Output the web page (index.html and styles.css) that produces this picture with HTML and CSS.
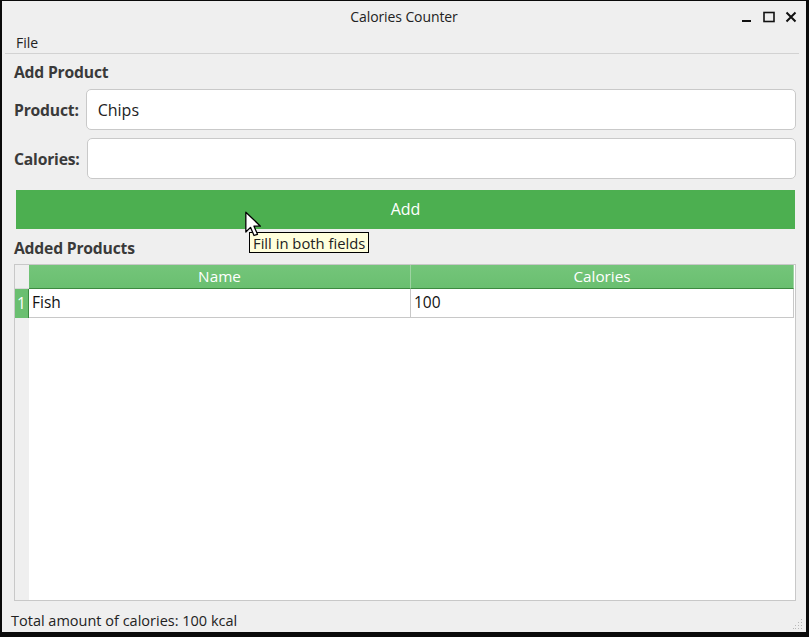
FILE: index.html
```html
<!DOCTYPE html>
<html>
<head>
<meta charset="utf-8">
<link rel="stylesheet" href="styles.css">
</head>
<body>
<div class="window">
  <div class="titlebar">
    <span class="title">Calories Counter</span>
    <div class="controls">
      <svg class="ctl" width="14" height="14" viewBox="0 0 14 14"><rect x="2" y="10" width="9" height="2" fill="#111"/></svg>
      <svg class="ctl" width="14" height="14" viewBox="0 0 14 14"><rect x="2" y="2.5" width="10" height="9" fill="none" stroke="#111" stroke-width="1.6"/></svg>
      <svg class="ctl" width="14" height="14" viewBox="0 0 14 14"><path d="M2.5 2.5 L11.5 11.5 M11.5 2.5 L2.5 11.5" stroke="#111" stroke-width="2"/></svg>
    </div>
  </div>
  <div class="menubar"><span class="menu-item">File</span></div>
  <div class="content">
    <div class="heading">Add Product</div>
    <div class="field-row">
      <label class="label">Product:</label>
      <div class="input">Chips</div>
    </div>
    <div class="field-row row2">
      <label class="label">Calories:</label>
      <div class="input"></div>
    </div>
    <div class="add-btn">Add</div>
    <div class="heading heading2">Added Products</div>
    <div class="table">
      <div class="thead">
        <div class="corner"></div>
        <div class="th name-col">Name</div>
        <div class="th cal-col">Calories</div>
      </div>
      <div class="trow">
        <div class="rowhead">1</div>
        <div class="td name-col">Fish</div>
        <div class="td cal-col">100</div>
      </div>
      <div class="tbody-rest">
        <div class="rowhead-empty"></div>
        <div class="empty"></div>
      </div>
    </div>
  </div>
  <div class="statusbar">
    <span class="status-text">Total amount of calories: 100 kcal</span>
    <svg class="grip" width="10" height="10" viewBox="0 0 10 10">
      <g fill="#b8b8b8">
        <rect x="8" y="0" width="1" height="1"/>
        <rect x="5" y="3" width="1" height="1"/><rect x="8" y="3" width="1" height="1"/>
        <rect x="2" y="6" width="1" height="1"/><rect x="5" y="6" width="1" height="1"/><rect x="8" y="6" width="1" height="1"/>
        <rect x="0" y="9" width="1" height="1"/><rect x="2" y="9" width="1" height="1"/><rect x="5" y="9" width="1" height="1"/><rect x="8" y="9" width="1" height="1"/>
      </g>
    </svg>
  </div>
  <div class="tooltip">Fill in both fields</div>
  <svg class="cursor" width="20" height="28" viewBox="0 0 16 24">
    <path d="M1 1 L1 18 L5 14 L8 21 L11 20 L8 13 L13.5 13 Z" fill="#fff" stroke="#000" stroke-width="1.1" stroke-linejoin="round"/>
  </svg>
</div>
</body>
</html>
```
FILE: styles.css
```css
html, body {
  margin: 0;
  padding: 0;
  background: #0a0a0a;
}
body {
  width: 809px;
  height: 637px;
  padding: 1px 0 0 2px;
  box-sizing: border-box;
  font-family: "Open Sans", "Noto Sans", sans-serif;
  color: #333;
}
.window {
  position: relative;
  width: 804px;
  height: 631px;
  background: #efefef;
  display: flex;
  flex-direction: column;
}
.titlebar {
  height: 31px;
  flex: none;
  display: flex;
  align-items: center;
  justify-content: center;
  position: relative;
}
.title {
  font-size: 14px;
  color: #222;
  letter-spacing: -0.1px;
}
.controls {
  position: absolute;
  right: 8px;
  top: 9px;
  display: flex;
  gap: 8px;
}
.ctl { display: block; }
.menubar {
  height: 21px;
  flex: none;
  margin: 0 7px 0 3px;
  border-bottom: 1px solid #d2d2d2;
  display: flex;
  align-items: center;
}
.menu-item {
  font-size: 14px;
  color: #222;
  padding-left: 11px;
}
.content {
  flex: none;
  display: flex;
  flex-direction: column;
  padding: 8px 10px 0 12px;
}
.heading {
  height: 20px;
  line-height: 20px;
  font-weight: 700;
  font-size: 15.7px;
  color: #3a3a3a;
  letter-spacing: -0.2px;
}
.field-row {
  margin-top: 7px;
  height: 41px;
  display: flex;
  align-items: center;
  gap: 7px;
}
.row2 { margin-top: 8px; }
.label {
  font-weight: 700;
  font-size: 15.7px;
  color: #3a3a3a;
  letter-spacing: -0.2px;
}
.input {
  flex: 1;
  height: 41px;
  box-sizing: border-box;
  background: #fff;
  border: 1px solid #c9c9c9;
  border-radius: 5px;
  padding-left: 11px;
  display: flex;
  align-items: center;
  font-size: 16px;
  color: #222;
}
.add-btn {
  margin: 11px 1px 0 2px;
  height: 39px;
  background: #4caf50;
  color: #fff;
  font-size: 16px;
  display: flex;
  align-items: center;
  justify-content: center;
  padding-bottom: 1px;
  box-sizing: border-box;
}
.heading2 { margin-top: 9px; }
.table {
  margin-top: 6px;
  height: 337px;
  box-sizing: border-box;
  border: 1px solid #c8c8c8;
  background: #fff;
  display: flex;
  flex-direction: column;
}
.thead {
  height: 24px;
  flex: none;
  display: flex;
}
.corner {
  width: 14px;
  background: #efefef;
  border-bottom: 1px solid #d8d8d8;
}
.th {
  background: linear-gradient(#74c57a, #6abf70);
  border-bottom: 1px solid #3c8a40;
  color: #fff;
  font-size: 15.3px;
  display: flex;
  align-items: center;
  justify-content: center;
  padding-bottom: 1px;
  box-sizing: border-box;
}
.name-col {
  width: 382px;
  flex: none;
  box-sizing: border-box;
  border-right: 1px solid #c8c8c8;
}
.th.name-col { border-right: 1px solid #9ed3a2; }
.cal-col {
  width: 383px;
  flex: none;
  box-sizing: border-box;
}
.th.cal-col { border-right: 1px solid #9ed3a2; }
.td.cal-col { border-right: 1px solid #c8c8c8; }
.trow {
  height: 29px;
  flex: none;
  display: flex;
}
.rowhead {
  width: 14px;
  box-sizing: border-box;
  background: #6abf70;
  border-right: 1px solid #3c8a40;
  color: #fff;
  font-size: 15.5px;
  display: flex;
  align-items: center;
  justify-content: center;
  padding-bottom: 2px;
}
.td {
  border-bottom: 1px solid #c8c8c8;
  font-size: 15.5px;
  color: #111;
  display: flex;
  align-items: center;
  padding-left: 3px;
  padding-bottom: 2px;
}
.tbody-rest {
  flex: 1;
  display: flex;
}
.rowhead-empty {
  width: 14px;
  background: #efefef;
}
.empty { flex: 1; background: #fff; }
.statusbar {
  flex: 1;
  position: relative;
  display: flex;
  align-items: flex-end;
  padding: 0 0 2px 9px;
}
.status-text {
  font-size: 14.5px;
  color: #222;
}
.grip {
  position: absolute;
  right: 3px;
  bottom: 3px;
}
.tooltip {
  position: absolute;
  left: 247px;
  top: 231px;
  height: 21px;
  box-sizing: border-box;
  padding: 0 3px;
  background: #ffffdc;
  border: 1px solid #000;
  color: #222;
  font-size: 14.8px;
  display: flex;
  align-items: center;
}
.cursor {
  position: absolute;
  left: 242px;
  top: 210px;
}
```
